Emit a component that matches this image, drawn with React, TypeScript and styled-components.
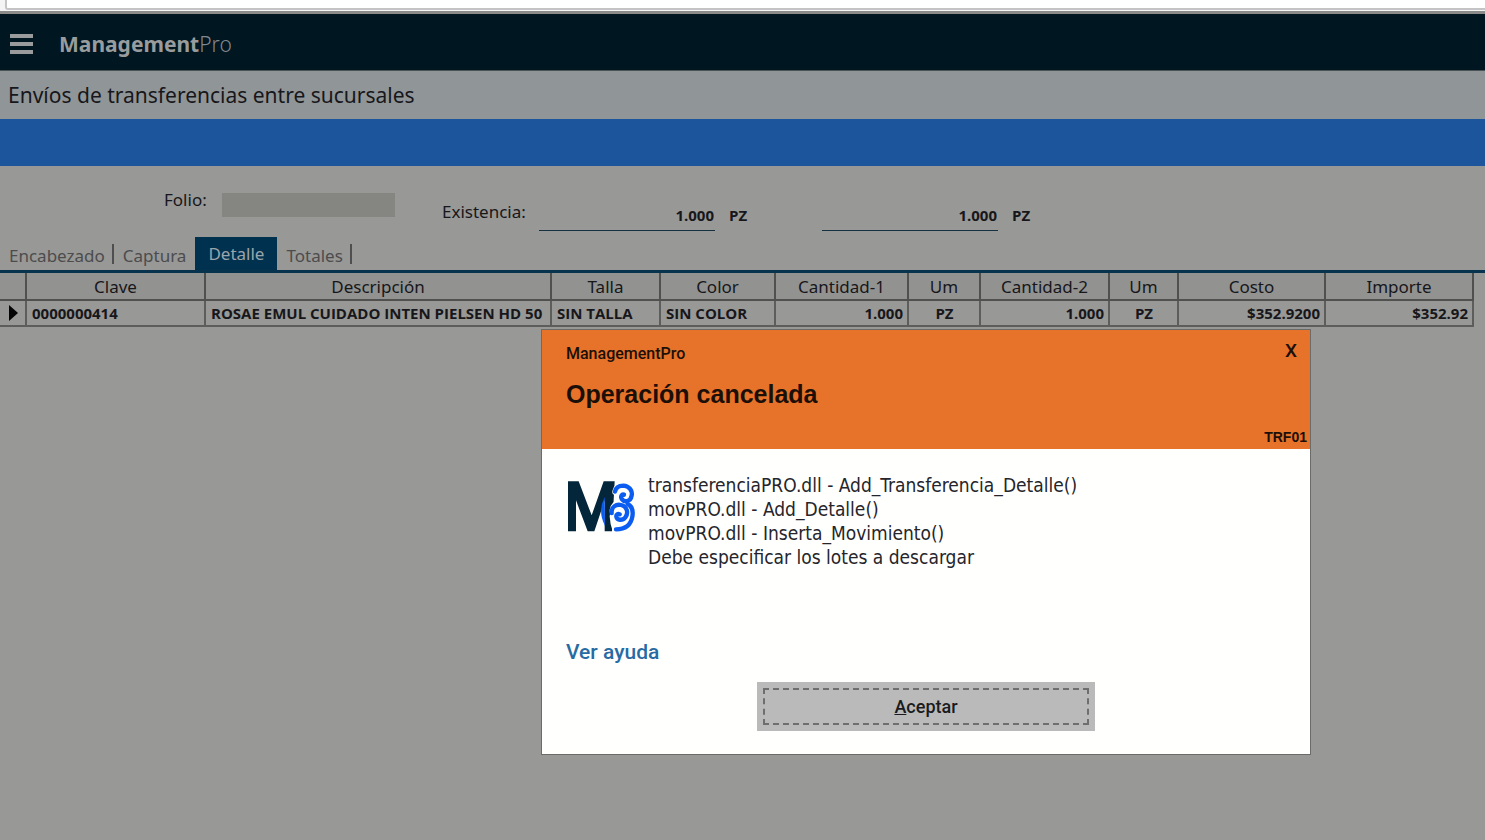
import React from "react";
import styled, { createGlobalStyle } from "styled-components";

const uiFont = `"Noto Sans", "Open Sans", sans-serif`;
const dataFont = `"Open Sans", "Noto Sans", sans-serif`;
const dialogFont = `Roboto, "Liberation Sans", sans-serif`;

const GlobalStyle = createGlobalStyle`
  * { box-sizing: border-box; }
  html, body { margin: 0; min-height: 100vh; background: #989896; }
  body { font-family: ${uiFont}; color: #17171b; overflow: hidden; }
  button, input { font: inherit; color: inherit; border-radius: 0; }
`;

const Page = styled.div`
  position: relative;
  min-height: 100vh;
  background: #989896;
`;

const BrowserStrip = styled.div`
  height: 14px;
  padding-left: 5px;
  background: #f4f4f4;
  border-bottom: 3px solid #8b8c89;
`;

const AddressField = styled.div`
  height: 10px;
  background: #fff;
  border: 2px solid #c4c4c4;
  border-top: 0;
  border-right: 0;
  border-bottom-left-radius: 3px;
`;

const AppBar = styled.header`
  display: flex;
  align-items: center;
  gap: 26px;
  height: 57px;
  padding: 3px 10px 0;
  background: #001621;
  border-bottom: 1px solid #4b5354;
`;

const MenuButton = styled.button`
  display: flex;
  flex-direction: column;
  justify-content: space-between;
  width: 23px;
  height: 20px;
  padding: 0;
  border: 0;
  background: none;
`;

const MenuBar = styled.span`
  height: 4px;
  background: #999b9c;
`;

const Brand = styled.div`
  font-family: ${uiFont};
  font-size: 21px;
  line-height: 28px;
  font-weight: 300;
  color: #80888d;
  strong { font-weight: 700; color: #999c9d; }
`;

const PageTitle = styled.h1`
  margin: 0;
  height: 48px;
  padding: 0 8px;
  font-size: 21px;
  line-height: 49px;
  font-weight: 400;
  background: #909598;
`;

const BlueBar = styled.div`
  height: 47px;
  background: #1c559b;
`;

const Summary = styled.form`
  display: flex;
  height: 71px;
  padding-left: 164px;
  font-size: 17px;
  line-height: 24px;
`;

const FolioGroup = styled.div`
  display: flex;
  padding-top: 22px;
  width: 278px;
  label { width: 58px; }
`;

const FolioInput = styled.input`
  width: 173px;
  height: 24px;
  margin-top: 5px;
  border: 0;
  background: #858582;
`;

const StockGroup = styled.div`
  display: flex;
  padding-top: 34px;
  label { width: 97px; }
`;

const StockInput = styled.input`
  width: 176px;
  height: 31px;
  padding: 0 1px 1px;
  border: 0;
  border-bottom: 1px solid #15303f;
  background: none;
  font-family: ${dataFont};
  font-size: 15px;
  font-weight: 700;
  text-align: right;
`;

const StockUnit = styled.span`
  width: 107px;
  padding: 3px 0 0 14px;
  font-family: ${dataFont};
  font-size: 15px;
  font-weight: 700;
`;

const Tabs = styled.nav`
  display: flex;
  align-items: flex-end;
  height: 36px;
  border-bottom: 3px solid #08334e;
`;

const Tab = styled.button<{ $active?: boolean; $divided?: boolean }>`
  position: relative;
  height: ${(p) => (p.$active ? 33 : 28)}px;
  padding: 0 ${(p) => (p.$active ? 13 : 9)}px;
  border: 0;
  font-size: 17px;
  line-height: 24px;
  white-space: nowrap;
  color: ${(p) => (p.$active ? "#9aa5ab" : "#4c4c4d")};
  background: ${(p) => (p.$active ? "#003250" : "none")};
  &::after {
    content: "";
    display: ${(p) => (p.$divided ? "block" : "none")};
    position: absolute;
    right: 0;
    top: 2px;
    width: 2px;
    height: 20px;
    background: #4f4f50;
  }
`;

const Grid = styled.table`
  width: calc(100% - 11px);
  table-layout: fixed;
  border-collapse: separate;
  border-spacing: 0;
  font-size: 15px;
`;

const HeadCell = styled.th`
  height: 28px;
  padding: 2px 0 0;
  font-size: 17px;
  font-weight: 400;
  line-height: 24px;
  text-align: center;
  background: #929290;
  border-right: 2px solid #50504f;
  border-bottom: 2px solid #50504f;
`;

const Cell = styled.td<{ $align: "left" | "center" | "right" }>`
  height: 26px;
  padding: 0 4px 0 5px;
  font-family: ${dataFont};
  font-weight: 700;
  line-height: 24px;
  text-align: ${(p) => p.$align};
  white-space: nowrap;
  border-right: 2px solid #5d5d5c;
  border-bottom: 2px solid #5d5d5c;
`;

const RowMarker = styled.span`
  display: block;
  width: 9px;
  height: 16px;
  margin-left: 4px;
  background: #050505;
  clip-path: polygon(0 0, 100% 50%, 0 100%);
`;

const Dialog = styled.section`
  position: absolute;
  left: 541px;
  top: 329px;
  width: 770px;
  border: 1px solid #6b6b6a;
  background: #fffffe;
  font-family: ${dialogFont};
`;

const DialogHead = styled.header`
  display: grid;
  grid-template-columns: 1fr auto;
  grid-template-rows: 46px 1fr 24px;
  height: 119px;
  padding-left: 24px;
  background: #e77229;
  color: #1b0f08;
`;

const DialogApp = styled.div`
  font-size: 16px;
  line-height: 47px;
  font-weight: 500;
`;

const CloseButton = styled.button`
  justify-self: end;
  width: 38px;
  height: 40px;
  padding: 0;
  border: 0;
  background: none;
  font-size: 19px;
  font-weight: 500;
`;

const DialogTitle = styled.h2`
  grid-column: 1 / 3;
  margin: 0;
  font-family: "Liberation Sans", Arial, sans-serif;
  font-size: 25px;
  line-height: 36px;
  font-weight: 700;
`;

const DialogCode = styled.div`
  grid-column: 2;
  justify-self: end;
  padding-right: 3px;
  font-family: "Liberation Sans", Arial, sans-serif;
  font-size: 14px;
  line-height: 24px;
  font-weight: 700;
`;

const DialogBody = styled.div`
  display: flex;
  flex-direction: column;
  padding: 24px 24px 23px;
`;

const Message = styled.div`
  display: flex;
  gap: 12px;
  height: 163px;
`;

const Logo = styled.svg`
  flex: none;
  width: 70px;
  height: 56px;
  margin-top: 5px;
`;

const MessageText = styled.p`
  margin: 0;
  font-family: "DejaVu Sans Condensed", "DejaVu Sans", sans-serif;
  font-stretch: condensed;
  font-size: 19px;
  line-height: 24px;
  color: #25252b;
`;

const HelpLink = styled.a`
  align-self: flex-start;
  font-size: 21px;
  line-height: 32px;
  font-weight: 500;
  color: #286ba3;
  text-decoration: none;
`;

const AcceptButton = styled.button`
  align-self: center;
  width: 338px;
  height: 49px;
  margin-top: 14px;
  padding: 6px;
  border: 0;
  background: #bababa;
  font-size: 18px;
  font-weight: 500;
  color: #1b1b1d;
`;

const FocusRing = styled.span`
  display: block;
  height: 37px;
  line-height: 33px;
  border: 2px dashed #6e6e6e;
`;

type Align = "left" | "center" | "right";
const columns: { name: string; width: number; value: string; align: Align }[] = [
  { name: "Clave", width: 179, value: "0000000414", align: "left" },
  { name: "Descripción", width: 346, value: "ROSAE EMUL CUIDADO INTEN PIELSEN HD 50", align: "left" },
  { name: "Talla", width: 109, value: "SIN TALLA", align: "left" },
  { name: "Color", width: 115, value: "SIN COLOR", align: "left" },
  { name: "Cantidad-1", width: 133, value: "1.000", align: "right" },
  { name: "Um", width: 72, value: "PZ", align: "center" },
  { name: "Cantidad-2", width: 129, value: "1.000", align: "right" },
  { name: "Um", width: 69, value: "PZ", align: "center" },
  { name: "Costo", width: 147, value: "$352.9200", align: "right" },
  { name: "Importe", width: 148, value: "$352.92", align: "right" },
];

function M8Logo() {
  return (
    <Logo viewBox="18 25 210 168" aria-hidden="true">
      <path
        d="M24 35H56L95 137L131 35H164L156 185H134V92L103 185H83L48 92V185H24Z"
        fill="#04263a"
      />
      <path d="M134 82Q112 125 135 168Z" fill="#0b5cf0" />
      <g fill="none" strokeLinecap="round" strokeLinejoin="round">
        <g stroke="#fffffe" strokeWidth="22">
          <path d="M168 66C171 53 180 49 190 49C209 50 219 64 216 79C213 92 205 98 194 99" />
          <path d="M160 124C160 110 170 101 183 101" />
          <path d="M168 179C164 168 161 160 160 140" />
        </g>
        <g stroke="#0b5cf0" strokeWidth="13">
          <path d="M165 66C168 51 179 48 190 48C208 49 218 63 215 78C212 96 194 99 186 89C180 80 186 73 192 75" />
          <path d="M203 103C217 110 220 124 217 141C213 164 197 179 168 179" />
          <path d="M155 130C153 112 168 103 183 106C202 110 206 130 196 143C187 154 171 152 169 141C168 134 174 131 179 134" />
        </g>
      </g>
    </Logo>
  );
}

export default function App() {
  return (
    <>
      <GlobalStyle />
      <Page>
        <BrowserStrip>
          <AddressField />
        </BrowserStrip>
        <AppBar>
          <MenuButton type="button" aria-label="Menú">
            <MenuBar />
            <MenuBar />
            <MenuBar />
          </MenuButton>
          <Brand>
            <strong>Management</strong>Pro
          </Brand>
        </AppBar>
        <PageTitle>Envíos de transferencias entre sucursales</PageTitle>
        <BlueBar />
        <Summary>
          <FolioGroup>
            <label htmlFor="folio">Folio:</label>
            <FolioInput id="folio" />
          </FolioGroup>
          <StockGroup>
            <label htmlFor="stock-1">Existencia:</label>
            <StockInput id="stock-1" defaultValue="1.000" />
            <StockUnit>PZ</StockUnit>
            <StockInput aria-label="Existencia 2" defaultValue="1.000" />
            <StockUnit>PZ</StockUnit>
          </StockGroup>
        </Summary>
        <Tabs>
          <Tab type="button" $divided>Encabezado</Tab>
          <Tab type="button">Captura</Tab>
          <Tab type="button" $active>Detalle</Tab>
          <Tab type="button" $divided>Totales</Tab>
        </Tabs>
        <Grid>
          <colgroup>
            <col width={27} />
            {columns.map((c, i) => (
              <col key={i} width={c.width} />
            ))}
          </colgroup>
          <thead>
            <tr>
              <HeadCell />
              {columns.map((c, i) => (
                <HeadCell key={i} scope="col">{c.name}</HeadCell>
              ))}
            </tr>
          </thead>
          <tbody>
            <tr>
              <Cell $align="left"><RowMarker /></Cell>
              {columns.map((c, i) => (
                <Cell key={i} $align={c.align}>{c.value}</Cell>
              ))}
            </tr>
          </tbody>
        </Grid>
        <Dialog role="dialog" aria-labelledby="dialog-title">
          <DialogHead>
            <DialogApp>ManagementPro</DialogApp>
            <CloseButton type="button" aria-label="Cerrar">X</CloseButton>
            <DialogTitle id="dialog-title">Operación cancelada</DialogTitle>
            <DialogCode>TRF01</DialogCode>
          </DialogHead>
          <DialogBody>
            <Message>
              <M8Logo />
              <MessageText>
                transferenciaPRO.dll - Add_Transferencia_Detalle()<br />
                movPRO.dll - Add_Detalle()<br />
                movPRO.dll - Inserta_Movimiento()<br />
                Debe especificar los lotes a descargar
              </MessageText>
            </Message>
            <HelpLink href="#ayuda">Ver ayuda</HelpLink>
            <AcceptButton type="button">
              <FocusRing><u>A</u>ceptar</FocusRing>
            </AcceptButton>
          </DialogBody>
        </Dialog>
      </Page>
    </>
  );
}
